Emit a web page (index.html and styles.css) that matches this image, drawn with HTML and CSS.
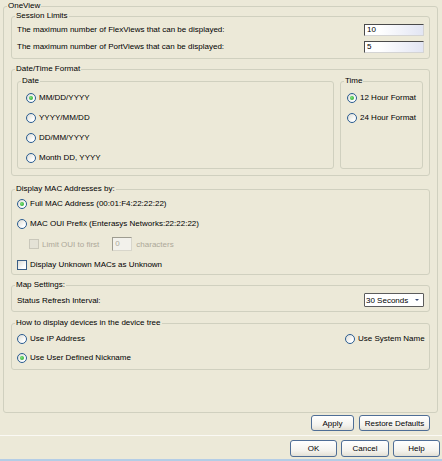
FILE: index.html
```html
<!DOCTYPE html>
<html>
<head>
<meta charset="utf-8">
<link rel="stylesheet" href="styles.css">
</head>
<body>
<div class="dialog">
  <section class="group outer">
    <span class="legend">OneView</span>
    <div class="outer-body">
      <section class="group session">
        <span class="legend">Session Limits</span>
        <div class="row between"><span>The maximum number of FlexViews that can be displayed:</span><span class="textbox">10</span></div>
        <div class="row between"><span>The maximum number of PortViews that can be displayed:</span><span class="textbox">5</span></div>
      </section>

      <section class="group datetime">
        <span class="legend">Date/Time Format</span>
        <section class="group date">
          <span class="legend">Date</span>
          <div class="row opt"><span class="radio checked"></span><span>MM/DD/YYYY</span></div>
          <div class="row opt"><span class="radio"></span><span>YYYY/MM/DD</span></div>
          <div class="row opt"><span class="radio"></span><span>DD/MM/YYYY</span></div>
          <div class="row opt"><span class="radio"></span><span>Month DD, YYYY</span></div>
        </section>
        <section class="group time">
          <span class="legend">Time</span>
          <div class="row opt"><span class="radio checked"></span><span>12 Hour Format</span></div>
          <div class="row opt"><span class="radio"></span><span>24 Hour Format</span></div>
        </section>
      </section>

      <section class="group mac">
        <span class="legend">Display MAC Addresses by:</span>
        <div class="row opt"><span class="radio checked"></span><span>Full MAC Address (00:01:F4:22:22:22)</span></div>
        <div class="row opt"><span class="radio"></span><span>MAC OUI Prefix (Enterasys Networks:22:22:22)</span></div>
        <div class="row opt limit-row disabled"><span class="check off"></span><span class="limit-label">Limit OUI to first</span><span class="smallbox">0</span><span>characters</span></div>
        <div class="row opt"><span class="check"></span><span>Display Unknown MACs as Unknown</span></div>
      </section>

      <section class="group map">
        <span class="legend">Map Settings:</span>
        <span>Status Refresh Interval:</span>
        <span class="combo"><span>30 Seconds</span><span class="arrow"></span></span>
      </section>

      <section class="group device">
        <span class="legend">How to display devices in the device tree</span>
        <div class="row opt"><span class="radio"></span><span>Use IP Address</span></div>
        <div class="row opt"><span class="radio"></span><span>Use System Name</span></div>
        <div class="row opt wide"><span class="radio checked"></span><span>Use User Defined Nickname</span></div>
      </section>
    </div>
  </section>

  <div class="apply-row">
    <button class="btn w-apply">Apply</button>
    <button class="btn w-restore">Restore Defaults</button>
  </div>
  <div class="sep"></div>
  <div class="ok-row">
    <button class="btn w-ok">OK</button>
    <button class="btn w-cancel">Cancel</button>
    <button class="btn w-help">Help</button>
  </div>
  <div class="footer-line"></div>
</div>
</body>
</html>
```

FILE: styles.css
```css
* { box-sizing: border-box; }
html, body { margin: 0; padding: 0; }
body {
  width: 442px;
  height: 461px;
  overflow: hidden;
  background: #ECE9D8;
  font-family: "Liberation Sans", Arial, sans-serif;
  font-size: 8px;
  color: #000;
}
.dialog {
  height: 461px;
  display: flex;
  flex-direction: column;
}

/* Group boxes */
.group {
  position: relative;
  border: 1px solid #D0D0BF;
  border-radius: 3px;
}
.legend {
  position: absolute;
  top: -6px;
  left: 3px;
  padding: 0 1px;
  height: 10px;
  line-height: 10px;
  background: #ECE9D8;
  white-space: nowrap;
}

.outer {
  margin: 6px 4px 0 3px;
  height: 407px;
  flex: none;
}
.outer-body {
  padding: 9px 7px 0 7px;
  display: flex;
  flex-direction: column;
}

.row {
  display: flex;
  align-items: center;
  height: 13px;
  white-space: nowrap;
}
.between { justify-content: space-between; }
.opt { gap: 3px; }

/* Session limits */
.session {
  padding: 6px 5px 5px 5px;
  display: flex;
  flex-direction: column;
  gap: 4px;
}
.textbox {
  width: 60px;
  height: 12px;
  border: 1px solid;
  border-color: #4A4A4A #D4D4D4 #D4D4D4 #4A4A4A;
  background: linear-gradient(to right, #FFFFFF 25%, #E2E5F3);
  padding-left: 2px;
  line-height: 10px;
}

/* Date / time */
.datetime {
  margin-top: 10px;
  display: flex;
  align-items: flex-start;
  gap: 6px;
  padding: 11px 6px 6px 5px;
}
.date, .time {
  display: flex;
  flex-direction: column;
  gap: 7px;
  padding: 9px 0 4px 8px;
}
.date { flex: 1; }
.time {
  width: 83px;
  flex: none;
  align-self: stretch;
  padding-left: 6px;
}

/* Radios & checks */
.radio {
  width: 10px;
  height: 10px;
  flex: none;
  border-radius: 50%;
  border: 1px solid #2A5C91;
  background: linear-gradient(135deg, #DCDCD5, #FFFFFF 75%);
  position: relative;
}
.radio.checked::after {
  content: "";
  position: absolute;
  left: 2px;
  top: 2px;
  width: 4px;
  height: 4px;
  border-radius: 50%;
  background: radial-gradient(circle at 40% 40%, #7BE07B, #21A121);
}
.check {
  width: 10px;
  height: 10px;
  flex: none;
  border: 1px solid #3A5E86;
  background: linear-gradient(135deg, #DCDCD5, #FFFFFF 75%);
}
.check.off {
  border-color: #C9C7BA;
  background: #E4E2D6;
}

/* MAC */
.mac {
  margin-top: 13px;
  padding: 7px 5px 3px 5px;
  display: flex;
  flex-direction: column;
  gap: 7px;
}
.limit-row {
  height: 14px;
  padding-left: 12px;
}
.disabled { color: #ACA899; }
.limit-label { margin-right: 10px; }
.smallbox {
  width: 20px;
  height: 14px;
  border: 1px solid;
  border-color: #9E9C90 #D8D6CB #D8D6CB #9E9C90;
  background: #F2F1EB;
  padding-left: 2px;
  line-height: 12px;
  margin-right: 1px;
}

/* Map */
.map {
  margin-top: 10px;
  display: flex;
  justify-content: space-between;
  align-items: center;
  padding: 7px 5px 4px 5px;
}
.combo {
  width: 60px;
  height: 14px;
  border: 1px solid #5C5C5C;
  border-radius: 1px;
  background: #FFFFFF;
  display: flex;
  align-items: center;
  justify-content: space-between;
  padding: 0 4px 0 1px;
}
.arrow {
  width: 0;
  height: 0;
  border-left: 2px solid transparent;
  border-right: 2px solid transparent;
  border-top: 2px solid #3C4E78;
}

/* Device */
.device {
  margin-top: 11px;
  padding: 8px 5px 5px 5px;
  display: grid;
  grid-template-columns: 328px auto;
  row-gap: 6px;
}
.device .wide { grid-column: 1 / 3; }

/* Buttons */
.btn {
  height: 16px;
  padding: 0;
  margin: 0;
  border: 1px solid #4F6E96;
  border-radius: 3px;
  background: linear-gradient(#FFFFFF, #F4F3EE 65%, #E3E0D5);
  font-family: "Liberation Sans", Arial, sans-serif;
  font-size: 8px;
  color: #000;
  display: flex;
  align-items: center;
  justify-content: center;
}
.apply-row {
  display: flex;
  justify-content: flex-end;
  gap: 5px;
  margin-top: 2px;
  padding-right: 12px;
}
.w-apply { width: 43px; }
.w-restore { width: 71px; }
.sep {
  margin-top: 4px;
  height: 1px;
  background: #FAF9F4;
}
.ok-row {
  display: flex;
  justify-content: flex-end;
  gap: 4px;
  margin-top: 4px;
  padding-right: 2px;
}
.ok-row .btn { height: 17px; }
.w-ok { width: 47px; }
.w-cancel { width: 48px; }
.w-help { width: 47px; }
.footer-line {
  margin-top: auto;
  height: 2px;
  background: #B4CDE6;
}
```
